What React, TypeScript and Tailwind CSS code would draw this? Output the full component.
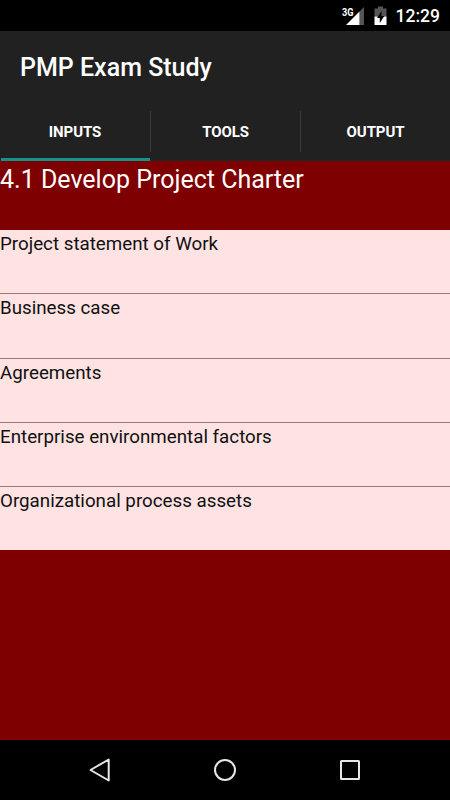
const tabs = ["INPUTS", "TOOLS", "OUTPUT"];

const inputs = [
  "Project statement of Work",
  "Business case",
  "Agreements",
  "Enterprise environmental factors",
  "Organizational process assets",
];

function StatusBar() {
  return (
    <div className="flex h-[31px] items-center justify-end bg-black pr-[10px] text-white">
      <svg width="24" height="20" viewBox="0 0 24 20" className="mr-[10px]">
        <path d="M19.500 5.500L24 1V19H19.500Z" fill="#555" />
        <path d="M19.500 5.500V19H6Z" fill="#fff" />
        <path d="M0 0H14V10H0Z" fill="#000" />
        <text
          x="2"
          y="9.500"
          fill="#fff"
          fontSize="10.500"
          fontWeight="700"
          fontFamily="Roboto"
          textLength="11.500"
          lengthAdjust="spacingAndGlyphs"
        >
          3G
        </text>
      </svg>
      <svg width="13" height="20" viewBox="0 0 13 20" className="mr-[9px]">
        <path d="M4 0.500H9V2.500H12.500V10.500H0.500V2.500H4Z" fill="#555" />
        <path d="M0.500 10.500H12.500V18.500A0.500 0.500 0 0 1 12 19H1A0.500 0.500 0 0 1 0.500 18.500Z" fill="#fff" />
        <path d="M7.500 5L3 12H5.800V17L10.300 10H7.500Z" fill="#000" />
      </svg>
      <span className="pt-[2px] text-[17.500px] leading-none font-medium">12:29</span>
    </div>
  );
}

function NavBar() {
  return (
    <div className="flex h-[60px] items-center justify-center gap-[101px] bg-black">
      <svg width="24" height="26" viewBox="0 0 24 26" fill="none" stroke="#e6e6e6" strokeWidth="2">
        <path d="M20.700 2.500V23.500L2.500 13Z" strokeLinejoin="round" />
      </svg>
      <svg width="24" height="24" viewBox="0 0 24 24" fill="none" stroke="#e6e6e6" strokeWidth="2">
        <circle cx="12" cy="12" r="10" />
      </svg>
      <svg width="24" height="24" viewBox="0 0 24 24" fill="none" stroke="#e6e6e6" strokeWidth="2">
        <rect x="3" y="3" width="18" height="18" rx="0.500" />
      </svg>
    </div>
  );
}

export default function App() {
  return (
    <div className="flex h-[800px] w-[450px] flex-col bg-[#7f0000] font-['Roboto',sans-serif]">
      <StatusBar />
      <header className="bg-[#212121] text-white">
        <h1 className="flex h-[70px] items-center pt-[3px] pl-5 text-[25px] font-medium">
          PMP Exam Study
        </h1>
        <nav className="flex h-[60px] border-b border-[#1c2a29]">
          {tabs.map((tab, i) => (
            <div key={tab} className="relative flex-1 pt-[10px]">
              <div
                className={`flex h-[41px] items-center justify-center pt-[2px] text-[15px] font-bold tracking-[-0.1px] ${i > 0 ? "border-l border-[#3a3a3a]" : ""}`}
              >
                {tab}
              </div>
              {i === 0 && (
                <div className="absolute right-0 -bottom-px left-px h-[3px] bg-[#13948a]" />
              )}
            </div>
          ))}
        </nav>
      </header>

      <main className="flex-1">
        <h2 className="h-[69px] pt-[1px] text-[25px] leading-[35px] text-white">
          4.1 Develop Project Charter
        </h2>
        <ul className="divide-y divide-[#9c7777] bg-[#ffe3e3]">
          {inputs.map((item) => (
            <li
              key={item}
              className="h-[64.3px] text-[18.750px] leading-[28px] text-[#111] last:h-[62.800px]"
            >
              {item}
            </li>
          ))}
        </ul>
      </main>

      <NavBar />
    </div>
  );
}
